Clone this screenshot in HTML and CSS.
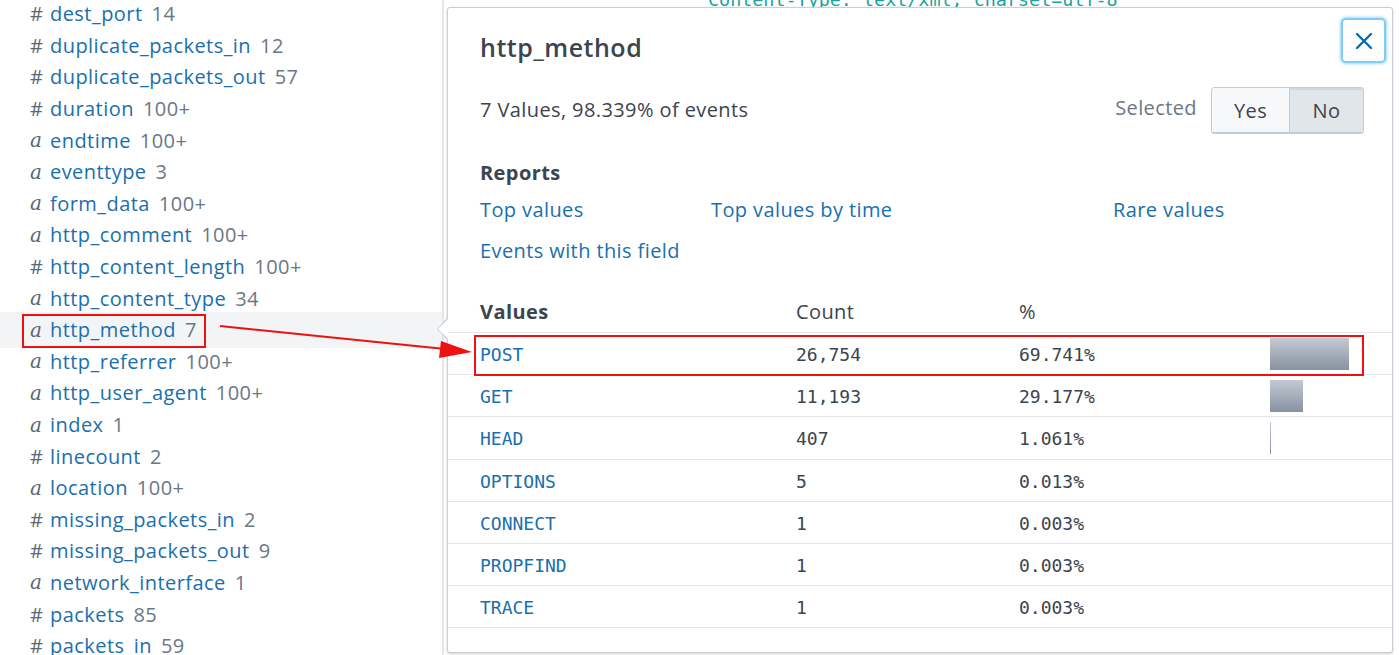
FILE: index.html
```html
<!DOCTYPE html>
<html>
<head>
<meta charset="utf-8">
<link rel="stylesheet" href="styles.css">
</head>
<body>
<div class="page">
  <aside class="sidebar">
    <ul class="fields">
      <li class="field"><span class="type num">#</span><span class="name">dest_port</span><span class="count">14</span></li>
      <li class="field"><span class="type num">#</span><span class="name">duplicate_packets_in</span><span class="count">12</span></li>
      <li class="field"><span class="type num">#</span><span class="name">duplicate_packets_out</span><span class="count">57</span></li>
      <li class="field"><span class="type num">#</span><span class="name">duration</span><span class="count">100+</span></li>
      <li class="field"><span class="type str">a</span><span class="name">endtime</span><span class="count">100+</span></li>
      <li class="field"><span class="type str">a</span><span class="name">eventtype</span><span class="count">3</span></li>
      <li class="field"><span class="type str">a</span><span class="name">form_data</span><span class="count">100+</span></li>
      <li class="field"><span class="type str">a</span><span class="name">http_comment</span><span class="count">100+</span></li>
      <li class="field"><span class="type num">#</span><span class="name">http_content_length</span><span class="count">100+</span></li>
      <li class="field"><span class="type str">a</span><span class="name">http_content_type</span><span class="count">34</span></li>
      <li class="field active"><span class="type str">a</span><span class="name">http_method</span><span class="count">7</span><span class="mark"></span></li>
      <li class="field"><span class="type str">a</span><span class="name">http_referrer</span><span class="count">100+</span></li>
      <li class="field"><span class="type str">a</span><span class="name">http_user_agent</span><span class="count">100+</span></li>
      <li class="field"><span class="type str">a</span><span class="name">index</span><span class="count">1</span></li>
      <li class="field"><span class="type num">#</span><span class="name">linecount</span><span class="count">2</span></li>
      <li class="field"><span class="type str">a</span><span class="name">location</span><span class="count">100+</span></li>
      <li class="field"><span class="type num">#</span><span class="name">missing_packets_in</span><span class="count">2</span></li>
      <li class="field"><span class="type num">#</span><span class="name">missing_packets_out</span><span class="count">9</span></li>
      <li class="field"><span class="type str">a</span><span class="name">network_interface</span><span class="count">1</span></li>
      <li class="field"><span class="type num">#</span><span class="name">packets</span><span class="count">85</span></li>
      <li class="field"><span class="type num">#</span><span class="name">packets_in</span><span class="count">59</span></li>
    </ul>
  </aside>
  <main class="events">
    <div class="code">Content-Type: text/xml; charset=utf-8</div>
  </main>

  <section class="popover">
    <span class="caret"></span>
    <header class="pop-head">
      <h2 class="pop-title">http_method</h2>
      <button class="close" aria-label="Close">
        <svg width="20" height="20" viewBox="0 0 20 20"><path d="M3 3 L17 17 M17 3 L3 17" stroke="#0b6aa6" stroke-width="2.4" stroke-linecap="round" fill="none"/></svg>
      </button>
    </header>
    <div class="stats">
      <span class="summary">7 Values, 98.339% of events</span>
      <div class="selected">
        <span class="sel-label">Selected</span>
        <div class="toggle">
          <span class="opt yes">Yes</span>
          <span class="opt no">No</span>
        </div>
      </div>
    </div>
    <h3 class="reports-title">Reports</h3>
    <div class="reports">
      <a class="link">Top values</a>
      <a class="link">Top values by time</a>
      <a class="link">Rare values</a>
      <a class="link">Events with this field</a>
    </div>
    <div class="table">
      <div class="trow thead">
        <span class="c1 hv">Values</span><span class="c2">Count</span><span class="c3">%</span><span class="c4"></span>
      </div>
      <div class="trow hl">
        <span class="c1 val">POST</span><span class="c2 mono">26,754</span><span class="c3 mono">69.741%</span><span class="c4"><i class="bar" style="width:79px"></i></span>
        <span class="rowmark"></span>
      </div>
      <div class="trow">
        <span class="c1 val">GET</span><span class="c2 mono">11,193</span><span class="c3 mono">29.177%</span><span class="c4"><i class="bar" style="width:33px"></i></span>
      </div>
      <div class="trow">
        <span class="c1 val">HEAD</span><span class="c2 mono">407</span><span class="c3 mono">1.061%</span><span class="c4"><i class="bar" style="width:1px"></i></span>
      </div>
      <div class="trow">
        <span class="c1 val">OPTIONS</span><span class="c2 mono">5</span><span class="c3 mono">0.013%</span><span class="c4"></span>
      </div>
      <div class="trow">
        <span class="c1 val">CONNECT</span><span class="c2 mono">1</span><span class="c3 mono">0.003%</span><span class="c4"></span>
      </div>
      <div class="trow">
        <span class="c1 val">PROPFIND</span><span class="c2 mono">1</span><span class="c3 mono">0.003%</span><span class="c4"></span>
      </div>
      <div class="trow">
        <span class="c1 val">TRACE</span><span class="c2 mono">1</span><span class="c3 mono">0.003%</span><span class="c4"></span>
      </div>
    </div>
  </section>

  <svg class="arrow" width="1399" height="655" viewBox="0 0 1399 655">
    <line x1="220" y1="326" x2="445" y2="349" stroke="#ee1111" stroke-width="2"/>
    <polygon points="472,352 441,341 439,358" fill="#ee1111"/>
  </svg>
</div>
</body>
</html>
```

FILE: styles.css
```css
* { box-sizing: border-box; }
html, body { margin: 0; padding: 0; }
body {
  width: 1399px;
  height: 655px;
  overflow: hidden;
  background: #fff;
  font-family: "Open Sans", "Liberation Sans", sans-serif;
  color: #3c444d;
}
.page {
  position: relative;
  display: flex;
  width: 1399px;
  height: 655px;
}
.sidebar {
  width: 444px;
  flex: none;
  border-right: 2px solid #e4e8ec;
  height: 100%;
}
.fields {
  list-style: none;
  margin: -2px 0 0 0;
  padding: 0;
}
.field {
  position: relative;
  display: flex;
  align-items: center;
  height: 31.6px;
  padding-left: 30px;
  font-size: 20px;
  letter-spacing: 0.45px;
  white-space: nowrap;
}
.field.active {
  background: #f2f4f5;
  box-shadow: 0 -2px 0 #f2f4f5, 0 2px 0 #f2f4f5;
}
.type {
  width: 20px;
  flex: none;
  color: #5c6773;
  letter-spacing: 0;
}
.type.num { font-size: 20px; }
.type.str {
  font-family: "DejaVu Serif", "Liberation Serif", serif;
  font-style: italic;
  font-size: 20px;
}
.name { color: #1a6fae; }
.count { color: #6b7785; margin-left: 9px; }
.mark {
  position: absolute;
  left: 22px;
  top: 0px;
  width: 184px;
  height: 34px;
  border: 2px solid #ee1111;
}
.events {
  flex: 1;
  position: relative;
}
.code {
  margin: -11px 0 0 264px;
  font-family: "DejaVu Sans Mono", "Liberation Mono", monospace;
  font-size: 18.4px;
  color: #1aa3a0;
  white-space: nowrap;
}

/* popover */
.popover {
  position: absolute;
  left: 447px;
  top: 7px;
  width: 946px;
  height: 646px;
  background: #fff;
  border: 1px solid #c8cfd6;
  border-radius: 3px;
  box-shadow: 0 1px 3px rgba(0,0,0,0.18);
  letter-spacing: 0.4px;
}
.caret {
  position: absolute;
  left: -11px;
  top: 309px;
  width: 0;
  height: 0;
  border-top: 12px solid transparent;
  border-bottom: 12px solid transparent;
  border-right: 11px solid #c8cfd6;
}
.caret::after {
  content: "";
  position: absolute;
  left: 1px;
  top: -11px;
  border-top: 11px solid transparent;
  border-bottom: 11px solid transparent;
  border-right: 11px solid #fff;
}
.pop-head {
  display: flex;
  justify-content: space-between;
  align-items: flex-start;
  padding: 10px 6px 0 32px;
  height: 56px;
}
.pop-title {
  margin: 13px 0 0 0;
  font-size: 25px;
  line-height: 32px;
  font-weight: 600;
  letter-spacing: 0.5px;
  color: #3c444d;
}
.close {
  width: 45px;
  height: 45px;
  border: 2px solid #7fcdf2;
  border-radius: 5px;
  background: #fff;
  box-shadow: 0 0 3px 1px rgba(100,190,240,0.6);
  display: flex;
  align-items: center;
  justify-content: center;
  padding: 0;
}
.stats {
  display: flex;
  justify-content: space-between;
  align-items: center;
  margin-top: 23px;
  padding: 0 28px 0 32px;
  height: 47px;
}
.summary { font-size: 20px; color: #3c444d; margin-top: -2px; }
.selected { display: flex; align-items: center; }
.sel-label { font-size: 20px; color: #6b7785; margin-right: 14px; margin-top: -6px; }
.toggle {
  display: flex;
  height: 47px;
  border: 1px solid #c3cbd4;
  border-bottom-width: 2px;
  border-radius: 4px;
  overflow: hidden;
}
.opt {
  display: flex;
  align-items: center;
  justify-content: center;
  font-size: 20px;
  color: #3c444d;
}
.opt.yes { width: 78px; background: #f7f8fa; border-right: 1px solid #c3cbd4; }
.opt.no { width: 73px; background: #e1e6eb; box-shadow: inset 0 2px 0 #d0d6dd; }
.reports-title {
  margin: 27px 0 0 32px;
  font-size: 20px;
  line-height: 24px;
  font-weight: 700;
  color: #3c444d;
}
.reports {
  display: grid;
  grid-template-columns: 231px 402px auto;
  grid-auto-rows: 41px;
  align-items: center;
  margin: 4px 0 0 32px;
}
.link { font-size: 20px; color: #1a6fae; }
.table { margin-top: 20px; }
.trow {
  position: relative;
  display: grid;
  grid-template-columns: 316px 223px 251px 1fr;
  align-items: center;
  padding-left: 32px;
  height: 42.2px;
  border-bottom: 1px solid #e1e6eb;
  letter-spacing: 0;
}
.thead { height: 42px; }
.thead span { font-size: 20px; color: #3c444d; letter-spacing: 0.4px; }
.thead .hv { font-weight: 700; }
.val, .mono {
  font-family: "DejaVu Sans Mono", "Liberation Mono", monospace;
  font-size: 18px;
  padding-top: 2px;
}
.val { color: #1a6fae; }
.mono { color: #3c444d; }
.c4 { display: flex; align-items: center; }
.bar {
  display: block;
  height: 32px;
  background: linear-gradient(#c3cad3, #8792a0);
}
.rowmark {
  position: absolute;
  left: 26px;
  top: 2px;
  width: 890px;
  height: 41px;
  border: 2px solid #ee1111;
}
.arrow {
  position: absolute;
  left: 0;
  top: 0;
  pointer-events: none;
}
```
